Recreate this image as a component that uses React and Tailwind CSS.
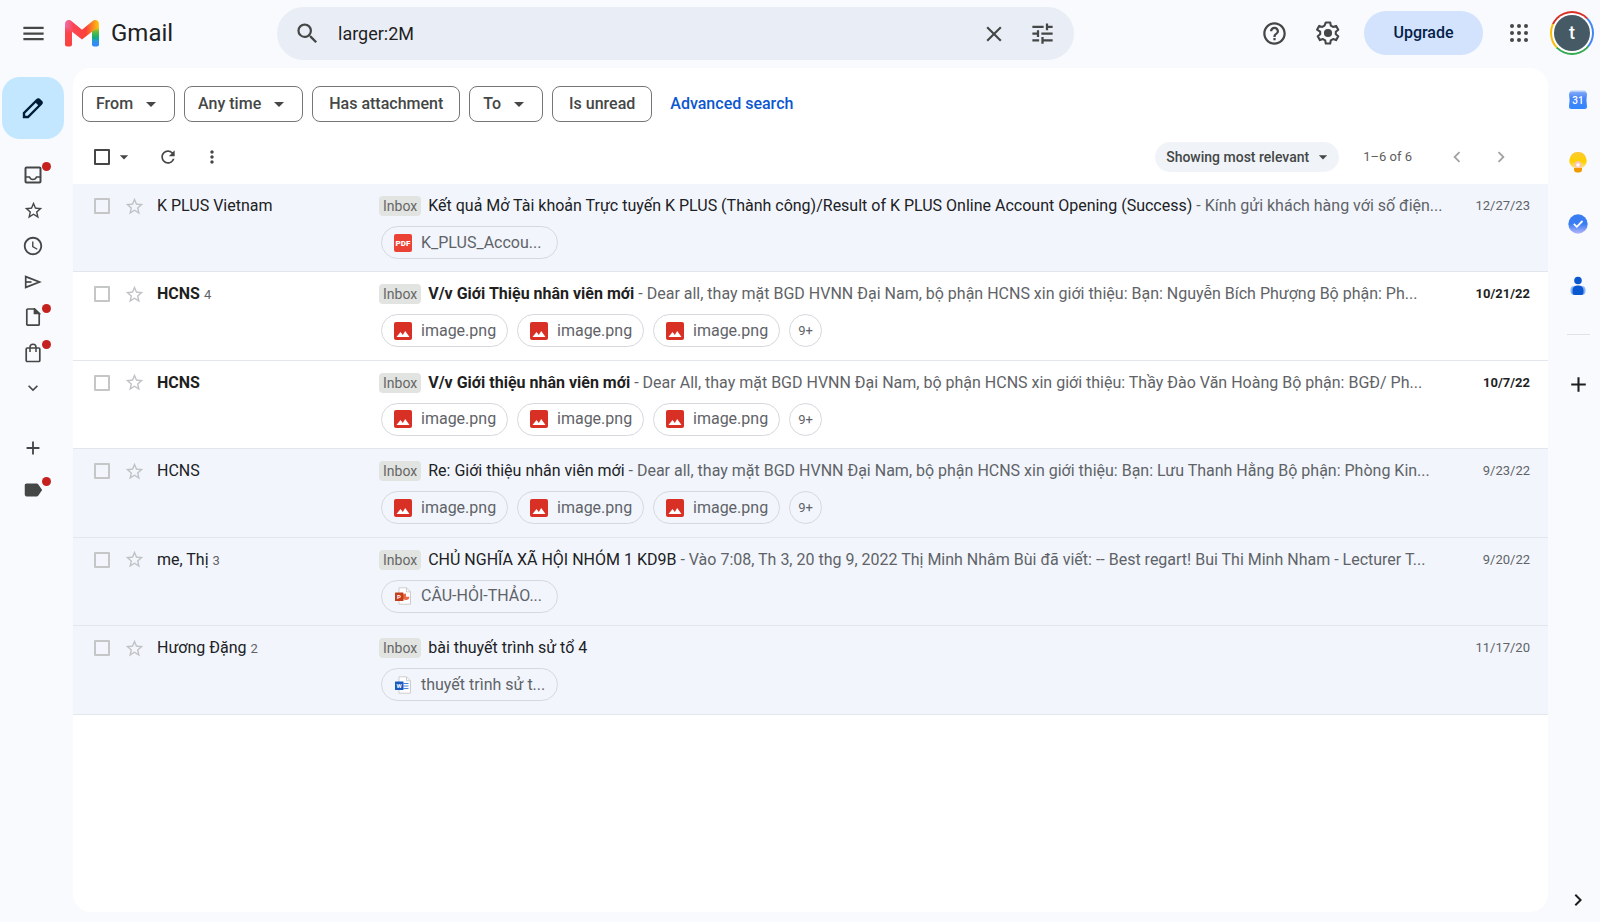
import {
  MdAccessTime,
  MdAdd,
  MdArrowDropDown,
  MdChevronLeft,
  MdChevronRight,
  MdClose,
  MdExpandMore,
  MdHelpOutline,
  MdLabel,
  MdMenu,
  MdMoreVert,
  MdRefresh,
  MdSearch,
  MdStarBorder,
  MdTune,
} from 'react-icons/md'

const mails = [
  {
    id: 1,
    from: 'K PLUS Vietnam',
    subject: 'Kết quả Mở Tài khoản Trực tuyến K PLUS (Thành công)/Result of K PLUS Online Account Opening (Success)',
    snippet: 'Kính gửi khách hàng với số điện...',
    date: '12/27/23',
    files: [{ type: 'pdf', name: 'K_PLUS_Accou...' }],
  },
  {
    id: 2,
    unread: true,
    from: 'HCNS',
    count: 4,
    subject: 'V/v Giới Thiệu nhân viên mới',
    snippet: 'Dear all, thay mặt BGD HVNN Đại Nam, bộ phận HCNS xin giới thiệu: Bạn: Nguyễn Bích Phượng Bộ phận: Ph...',
    date: '10/21/22',
    files: [{ type: 'image', name: 'image.png' }, { type: 'image', name: 'image.png' }, { type: 'image', name: 'image.png' }],
    more: '9+',
  },
  {
    id: 3,
    unread: true,
    from: 'HCNS',
    subject: 'V/v Giới thiệu nhân viên mới',
    snippet: 'Dear All, thay mặt BGD HVNN Đại Nam, bộ phận HCNS xin giới thiệu: Thầy Đào Văn Hoàng Bộ phận: BGĐ/ Ph...',
    date: '10/7/22',
    files: [{ type: 'image', name: 'image.png' }, { type: 'image', name: 'image.png' }, { type: 'image', name: 'image.png' }],
    more: '9+',
  },
  {
    id: 4,
    from: 'HCNS',
    subject: 'Re: Giới thiệu nhân viên mới',
    snippet: 'Dear all, thay mặt BGD HVNN Đại Nam, bộ phận HCNS xin giới thiệu: Bạn: Lưu Thanh Hằng Bộ phận: Phòng Kin...',
    date: '9/23/22',
    files: [{ type: 'image', name: 'image.png' }, { type: 'image', name: 'image.png' }, { type: 'image', name: 'image.png' }],
    more: '9+',
  },
  {
    id: 5,
    from: 'me, Thị',
    count: 3,
    subject: 'CHỦ NGHĨA XÃ HỘI NHÓM 1 KD9B',
    snippet: 'Vào 7:08, Th 3, 20 thg 9, 2022 Thị Minh Nhâm Bùi đã viết: -- Best regart! Bui Thi Minh Nham - Lecturer T...',
    date: '9/20/22',
    files: [{ type: 'ppt', name: 'CÂU-HỎI-THẢO...' }],
  },
  {
    id: 6,
    from: 'Hương Đặng',
    count: 2,
    subject: 'bài thuyết trình sử tổ 4',
    date: '11/17/20',
    files: [{ type: 'doc', name: 'thuyết trình sử t...' }],
  },
]

const filters = [
  { label: 'From', menu: true },
  { label: 'Any time', menu: true },
  { label: 'Has attachment' },
  { label: 'To', menu: true },
  { label: 'Is unread' },
]

const folders = [
  { label: 'Inbox', icon: InboxIcon, dot: true },
  { label: 'Starred', icon: StarIcon },
  { label: 'Snoozed', icon: ClockIcon },
  { label: 'Sent', icon: SentIcon },
  { label: 'Drafts', icon: DraftIcon, dot: true },
  { label: 'Purchases', icon: BagIcon, dot: true },
  { label: 'More', icon: MoreIcon },
]

const apps = [
  { label: 'Calendar', icon: CalendarIcon },
  { label: 'Keep', icon: KeepIcon },
  { label: 'Tasks', icon: TasksIcon },
  { label: 'Contacts', icon: ContactsIcon },
]

function GmailLogo() {
  return (
    <svg width="34" height="27" viewBox="0 0 34 27" fill="none">
      <defs>
        <linearGradient id="gm-left" x1="0" y1="0" x2="0" y2="1">
          <stop offset="0" stopColor="#ee79b4" />
          <stop offset="0.4" stopColor="#fb4653" />
          <stop offset="1" stopColor="#fb413b" />
        </linearGradient>
        <linearGradient id="gm-right" x1="0" y1="0" x2="0" y2="1">
          <stop offset="0.15" stopColor="#fbc212" />
          <stop offset="0.35" stopColor="#62bb3c" />
          <stop offset="0.6" stopColor="#12ad78" />
          <stop offset="0.78" stopColor="#2f93e8" />
          <stop offset="1" stopColor="#3186ff" />
        </linearGradient>
        <linearGradient id="gm-mid" gradientUnits="userSpaceOnUse" x1="0" y1="0" x2="34" y2="0">
          <stop offset="0" stopColor="#ee70ae" />
          <stop offset="0.25" stopColor="#fb4552" />
          <stop offset="0.62" stopColor="#fb413b" />
          <stop offset="0.82" stopColor="#fd8a20" />
          <stop offset="1" stopColor="#fdc810" />
        </linearGradient>
      </defs>
      <path d="M27 4h7v20.500a2 2 0 0 1-2 2h-3a2 2 0 0 1-2-2z" fill="url(#gm-right)" />
      <path d="M0 4h7v20.500a2 2 0 0 1-2 2H2a2 2 0 0 1-2-2z" fill="url(#gm-left)" />
      <path d="M0 4C0 .5 4-1.200 6.700 1.200L17 9.700 27.300 1.200C30-1.200 34 .5 34 4c0 1.500-.5 2.500-1.600 3.400L17 19.500 1.600 7.400C.5 6.500 0 5.500 0 4z" fill="url(#gm-mid)" />
      <path d="M0 4.500 7 11v6H0z" fill="url(#gm-left)" opacity="0.5" />
    </svg>
  )
}

function GearIcon() {
  return (
    <svg width="28" height="28" viewBox="0 0 24 24" fill="none" stroke="currentColor" strokeWidth="1.800" strokeLinejoin="round">
      <path d="M10.100 3h3.800l.5 2.700 1.900 1.100 2.600-.9 1.900 3.300-2.100 1.700v2.200l2.100 1.700-1.900 3.300-2.600-.9-1.900 1.100-.5 2.700h-3.800l-.5-2.700-1.900-1.100-2.600.9-1.900-3.300 2.100-1.700v-2.200L2.600 9.200l1.900-3.300 2.600.9 1.900-1.100z" />
      <circle cx="12" cy="12" r="2.600" fill="currentColor" />
    </svg>
  )
}

function AppsIcon() {
  return (
    <svg width="18" height="18" viewBox="0 0 18 18" fill="currentColor">
      {[2, 9, 16].map((y) => [2, 9, 16].map((x) => <circle key={`${x}-${y}`} cx={x} cy={y} r="2" />))}
    </svg>
  )
}

function PencilIcon() {
  return (
    <svg width="22" height="22" viewBox="0 0 22 22" fill="none" stroke="#001d35" strokeWidth="2.400">
      <path d="M2 20v-4L15 3c.8-.8 1.600-.8 2.400 0L19 4.600c.8.800.8 1.600 0 2.400L6 20z" />
      <path d="m13 5 4-3.500L20.500 5 17 9z" fill="#001d35" stroke="none" />
    </svg>
  )
}

function InboxIcon() {
  return (
    <svg width="18" height="18" viewBox="0 0 18 18" fill="none" stroke="currentColor" strokeWidth="2">
      <rect x="1.500" y="1.500" width="15" height="15" rx="1" />
      <path d="M1.500 11h4c.5 1.600 1.800 2.500 3.500 2.500s3-.9 3.500-2.500h4" strokeWidth="1.500" />
    </svg>
  )
}

function StarIcon() {
  return <MdStarBorder size={21} />
}

function ClockIcon() {
  return <MdAccessTime size={22} />
}

function SentIcon() {
  return (
    <svg width="18" height="14" viewBox="0 0 18 14" fill="none" stroke="currentColor" strokeWidth="1.700">
      <path d="M1.700 1.600v10.800L15.500 7z" />
      <path d="M2 7h5.500" />
    </svg>
  )
}

function DraftIcon() {
  return (
    <svg width="16" height="18" viewBox="0 0 16 18" fill="none" stroke="currentColor" strokeWidth="1.700">
      <path d="M2.800 1h6.700L14.200 5.500v10.700a1 1 0 0 1-1 1H2.800a1 1 0 0 1-1-1V2a1 1 0 0 1 1-1z" />
      <path d="M9.500 1v4.500h4.700z" fill="currentColor" />
    </svg>
  )
}

function BagIcon() {
  return (
    <svg width="16" height="20" viewBox="0 0 16 20" fill="none" stroke="currentColor" strokeWidth="1.700">
      <rect x="1.200" y="5" width="13.600" height="13.500" rx="1" />
      <path d="M5 9V4.300a3 3 0 0 1 6 0V9" strokeWidth="1.500" />
    </svg>
  )
}

function MoreIcon() {
  return <MdExpandMore size={20} />
}

function CalendarIcon() {
  return (
    <svg width="20" height="20" viewBox="0 0 20 20">
      <defs>
        <linearGradient id="cal" x1="0" y1="0" x2="0" y2="1">
          <stop offset="0" stopColor="#7ea9f8" />
          <stop offset="0.35" stopColor="#4a86f5" />
          <stop offset="1" stopColor="#3186ff" />
        </linearGradient>
      </defs>
      <rect x="1.500" y="0.500" width="17" height="6" rx="2.500" fill="#b3cdfb" />
      <path d="M3.500 2h13A2.500 2.500 0 0 1 19 4.500l-.6 5.500.6 6.500a2.500 2.500 0 0 1-2.500 2.500h-13A2.500 2.500 0 0 1 1 16.500L1.600 10 1 4.500A2.500 2.500 0 0 1 3.500 2z" fill="url(#cal)" />
      <text x="10" y="14" textAnchor="middle" fontSize="10" fontWeight="500" fontFamily="Roboto, sans-serif" fill="#fff">31</text>
    </svg>
  )
}

function KeepIcon() {
  return (
    <svg width="20" height="22" viewBox="0 0 20 22">
      <defs>
        <linearGradient id="bulb" x1="0" y1="0" x2="0" y2="1">
          <stop offset="0" stopColor="#fcc934" />
          <stop offset="0.6" stopColor="#fdd100" />
          <stop offset="1" stopColor="#fde293" />
        </linearGradient>
      </defs>
      <path d="M6 15h8v3.500a3 3 0 0 1-3 3H9a3 3 0 0 1-3-3z" fill="#f29900" />
      <path d="M10 1a8.500 8.500 0 0 0-5 15.400c1.200.5 2 .6 5 .6s3.800-.1 5-.6A8.500 8.500 0 0 0 10 1z" fill="url(#bulb)" />
      <circle cx="10" cy="13.500" r="3.400" fill="#f9c5b8" />
      <circle cx="10" cy="14" r="1.800" fill="#fff" />
    </svg>
  )
}

function TasksIcon() {
  return (
    <svg width="20" height="20" viewBox="0 0 20 20">
      <defs>
        <linearGradient id="task" x1="0" y1="0" x2="0" y2="1">
          <stop offset="0.5" stopColor="#3a7df2" />
          <stop offset="1" stopColor="#b5b6fb" />
        </linearGradient>
      </defs>
      <circle cx="10" cy="10" r="9.700" fill="url(#task)" />
      <path d="m5.800 9.800 3 3 5.700-5.800" fill="none" stroke="#fff" strokeWidth="1.800" />
    </svg>
  )
}

function ContactsIcon() {
  return (
    <svg width="16" height="20" viewBox="0 0 16 20">
      <circle cx="8" cy="4.500" r="3.800" fill="#0b57d0" />
      <rect x="0.500" y="10" width="15" height="9" rx="4" fill="#8ab4f8" />
      <path d="M2.500 14a5 4.500 0 0 1 5-4.500h1a5 4.500 0 0 1 5 4.500v2.500a2.500 2.500 0 0 1-2.500 2.500H5a2.500 2.500 0 0 1-2.500-2.500z" fill="#0b57d0" />
    </svg>
  )
}

function FileIcon({ type }) {
  if (type === 'image') {
    return (
      <svg className="shrink-0" width="18" height="18" viewBox="0 0 18 18">
        <rect width="18" height="18" rx="2" fill="#d93025" />
        <path d="M2.500 15 6.500 10l2.300 2.900 2.400-3.900L15.500 15z" fill="#fff" />
      </svg>
    )
  }
  if (type === 'pdf') {
    return (
      <svg className="shrink-0" width="18" height="18" viewBox="0 0 18 18">
        <rect width="18" height="18" rx="2" fill="#ea4335" />
        <text x="9" y="12" textAnchor="middle" fontSize="8" fontWeight="900" fontFamily="Roboto, sans-serif" fill="#fff">PDF</text>
      </svg>
    )
  }
  const word = type === 'doc'
  return (
    <svg className="shrink-0" width="18" height="18" viewBox="0 0 18 18">
      <path d="M5 .8h7.500L16.500 4.800v12.400H5z" fill="#fff" stroke="#cdcdcd" />
      <path d="M12.500.8v4h4" fill="none" stroke="#cdcdcd" />
      {word ? (
        <path d="M9.500 7.500h5M9.500 10h5M9.500 12.500h5" stroke="#4a86d8" />
      ) : (
        <path d="M12 6.500a3.300 3.300 0 1 0 3.300 3.300H12z" fill="#ed6c47" />
      )}
      <rect x="1" y="5.500" width="8.500" height="8.500" rx="0.500" fill={word ? '#185abd' : '#c43e1c'} />
      <text x="5" y="12" textAnchor="middle" fontSize="6" fontWeight="700" fontFamily="Roboto, sans-serif" fill="#fff">{word ? 'W' : 'P'}</text>
    </svg>
  )
}

function Header() {
  return (
    <header className="flex h-[68px] items-start">
      <div className="flex h-[66px] w-[277px] shrink-0 items-center pl-5">
        <button aria-label="Main menu" className="text-[#444746]">
          <MdMenu size={27} />
        </button>
        <a href="#inbox" className="ml-[18px] flex items-center gap-3">
          <GmailLogo />
          <span className="text-2xl text-[#202124]">Gmail</span>
        </a>
      </div>
      <form className="mt-[7px] flex h-[53px] max-w-[797px] flex-1 items-center rounded-full bg-[#e9eef6] pr-[18px] pl-[17px] text-[#444746]">
        <button type="button" aria-label="Search mail">
          <MdSearch size={27} />
        </button>
        <input
          aria-label="Search"
          defaultValue="larger:2M"
          className="ml-[17px] min-w-0 flex-1 bg-transparent text-lg text-[#1f1f1f] outline-none"
        />
        <button type="button" aria-label="Clear search">
          <MdClose size={26} />
        </button>
        <button type="button" aria-label="Search options" className="ml-[22px]">
          <MdTune size={27} />
        </button>
      </form>
      <div className="ml-auto flex h-[66px] items-center pr-[6px] text-[#444746]">
        <button aria-label="Support">
          <MdHelpOutline size={27} />
        </button>
        <button aria-label="Settings" className="ml-[26px]">
          <GearIcon />
        </button>
        <button className="ml-[22px] h-11 w-[119px] rounded-full bg-[#d3e3fd] text-base font-medium text-[#041e49]">
          Upgrade
        </button>
        <button aria-label="Google apps" className="ml-[27px]">
          <AppsIcon />
        </button>
        <button
          aria-label="Account"
          className="ml-[22px] flex size-11 items-center justify-center rounded-full bg-[conic-gradient(#d93025_0deg_45deg,#4285f4_45deg_130deg,#34a853_130deg_225deg,#fbbc04_225deg_295deg,#d93025_295deg_360deg)]"
        >
          <span className="flex size-10 items-center justify-center rounded-full bg-white">
            <span className="flex size-9 items-center justify-center rounded-full bg-[#455a64] text-lg font-medium text-white">t</span>
          </span>
        </button>
      </div>
    </header>
  )
}

function Dot() {
  return <span className="absolute top-[3px] -right-[2px] size-[9px] rounded-full bg-[#c5221f]" />
}

function Sidebar() {
  return (
    <aside className="flex w-[73px] shrink-0 flex-col pt-[9px] text-[#444746]">
      <button aria-label="Compose" className="ml-[2px] flex size-[62px] items-center justify-center rounded-[18px] bg-[#c2e7ff]">
        <PencilIcon />
      </button>
      <nav className="mt-5 ml-[17px] flex h-[245px] w-8 flex-col justify-between">
        {folders.map(({ label, icon: Icon, dot }) => (
          <a key={label} href="#folder" aria-label={label} className="relative flex size-8 items-center justify-center">
            <Icon />
            {dot && <Dot />}
          </a>
        ))}
      </nav>
      <button aria-label="Create new label" className="mt-7 ml-[17px] flex size-8 items-center justify-center">
        <MdAdd size={22} />
      </button>
      <a href="#label" aria-label="Labels" className="relative mt-[10px] ml-[17px] flex size-8 items-center justify-center">
        <MdLabel size={22} />
        <Dot />
      </a>
    </aside>
  )
}

function Filters() {
  return (
    <div className="flex items-center gap-[9px] pt-[18px] pl-[9px]">
      {filters.map((f) => (
        <button
          key={f.label}
          className={`flex h-9 items-center rounded-lg border border-[#747775] text-base font-medium text-[#444746] ${
            f.menu ? 'px-[13px]' : 'px-4'
          }`}
        >
          {f.label}
          {f.menu && <MdArrowDropDown size={24} className="-mr-[2px] ml-[6px]" />}
        </button>
      ))}
      <a href="#advanced" className="ml-[9px] text-base font-medium text-[#0b57d0]">
        Advanced search
      </a>
    </div>
  )
}

function Toolbar() {
  return (
    <div className="flex h-[62px] items-center pt-2 pr-9 pl-[21px] text-[#444746]">
      <input type="checkbox" aria-label="Select all" className="size-4 appearance-none rounded-[1px] border-2 border-[#444746]" />
      <button aria-label="Select options" className="ml-[4px]">
        <MdArrowDropDown size={20} />
      </button>
      <button aria-label="Refresh" className="ml-[24px]">
        <MdRefresh size={20} />
      </button>
      <button aria-label="More actions" className="ml-[24px]">
        <MdMoreVert size={20} />
      </button>
      <button className="ml-auto flex h-[30px] items-center rounded-full bg-[#f0f4f9] pr-[6px] pl-[11px] text-sm font-medium text-[#444746]">
        Showing most relevant
        <MdArrowDropDown size={20} className="ml-1" />
      </button>
      <span className="ml-6 text-[13px] text-[#5e5e5e]">1–6 of 6</span>
      <button aria-label="Newer" className="ml-[34px] text-[#a0a2a4]">
        <MdChevronLeft size={22} />
      </button>
      <button aria-label="Older" className="ml-[22px] text-[#a0a2a4]">
        <MdChevronRight size={22} />
      </button>
    </div>
  )
}

function MailRow({ mail }) {
  const strong = mail.unread ? 'font-bold text-[#1f1f1f]' : 'text-[#202124]'
  return (
    <tr className={`border-b border-[#e3e7ec] align-top ${mail.unread ? 'bg-white' : 'bg-[#f2f6fc]'}`}>
      <td className="pt-[2px]">
        <div className="flex h-10 items-center gap-[14px] pl-[21px]">
          <input type="checkbox" aria-label={`Select ${mail.subject}`} className="size-4 appearance-none rounded-[1px] border-2 border-[#c4c7c5]" />
          <button aria-label="Star" className="text-[#c0c2c4]">
            <MdStarBorder size={21} />
          </button>
        </div>
      </td>
      <td className={`pt-[2px] text-base leading-10 ${strong}`}>
        {mail.from}
        {mail.count && <span className="ml-1 text-[13px] font-normal text-[#5f6368]">{mail.count}</span>}
      </td>
      <td className="pt-[2px]">
        <div className="flex h-10 items-center text-base whitespace-nowrap">
          <span className="mr-[7px] rounded bg-[#e1e4e0] px-1 text-sm leading-5 text-[#666]">Inbox</span>
          <span className={strong}>{mail.subject}</span>
          {mail.snippet && <span className="text-[#5f6368]">&nbsp;- {mail.snippet}</span>}
        </div>
        <div className="flex gap-[9px] pl-[2px]">
          {mail.files.map((file, i) => (
            <a
              key={i}
              href="#file"
              className={`flex h-[33px] items-center gap-[9px] rounded-full border border-[#d5d8dd] pl-3 text-base whitespace-nowrap text-[#5f6368] ${
                file.type === 'image' ? 'w-[127px]' : 'w-[177px]'
              }`}
            >
              <FileIcon type={file.type} />
              {file.name}
            </a>
          ))}
          {mail.more && (
            <button className="size-[33px] rounded-full border border-[#d5d8dd] text-[13px] text-[#5f6368]">{mail.more}</button>
          )}
        </div>
      </td>
      <td className={`pt-[2px] pr-[18px] text-right text-[13px] leading-10 ${mail.unread ? 'font-bold text-[#1f1f1f]' : 'text-[#5f6368]'}`}>
        {mail.date}
      </td>
    </tr>
  )
}

function SidePanel() {
  return (
    <aside className="flex w-[52px] shrink-0 flex-col items-center pt-[17px] pb-[10px] pl-2 text-[#1f1f1f]">
      <div className="flex flex-col gap-[32px]">
        {apps.map(({ label, icon: Icon }) => (
          <button key={label} aria-label={label} className="flex size-[30px] items-center justify-center">
            <Icon />
          </button>
        ))}
      </div>
      <hr className="mt-[33px] w-[23px] border-[#dfe2e6]" />
      <button aria-label="Get add-ons" className="mt-[37px]">
        <MdAdd size={25} />
      </button>
      <button aria-label="Hide side panel" className="mt-auto">
        <MdChevronRight size={24} />
      </button>
    </aside>
  )
}

export default function App() {
  return (
    <div className="flex min-h-screen flex-col bg-[#f8fafd] font-[Roboto,'Noto_Sans',sans-serif]">
      <Header />
      <div className="flex flex-1">
        <Sidebar />
        <main className="mb-[10px] min-w-0 flex-1 rounded-[18px] bg-white">
          <Filters />
          <Toolbar />
          <table className="h-[531px] w-full table-fixed border-collapse">
            <colgroup>
              <col className="w-[84px]" />
              <col className="w-[222px]" />
              <col />
              <col className="w-[90px]" />
            </colgroup>
            <tbody>
              {mails.map((mail) => (
                <MailRow key={mail.id} mail={mail} />
              ))}
            </tbody>
          </table>
        </main>
        <SidePanel />
      </div>
    </div>
  )
}
